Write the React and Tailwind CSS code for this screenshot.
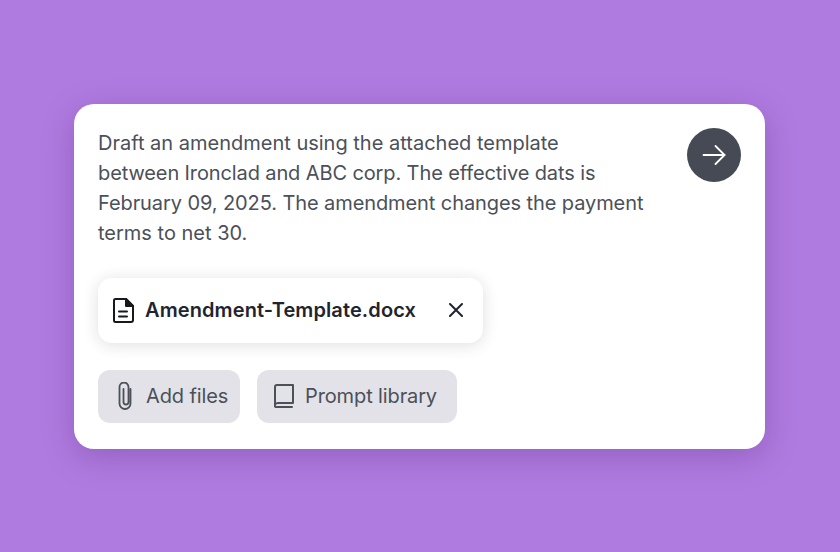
function ToolButton({ icon, label, className }) {
    return (
        <button type="button" className={`flex h-[53px] items-center rounded-xl bg-[#e2e2e8] text-[20px] tracking-[-0.12px] text-[#4b5059] ${className}`}>
            {icon}
            {label}
        </button>
    );
}

export default function App() {
    return (
        <div className="flex h-[552px] w-[840px] items-center justify-center bg-[#b07be0] pr-px font-['Inter',sans-serif]">
            <div className="flex h-[345px] w-[691px] flex-col rounded-[20px] bg-white px-6 pt-6 shadow-[0_8px_32px_rgba(70,30,110,0.28)]">
                <div className="flex items-start justify-between">
                    <p className="whitespace-nowrap text-[20px] leading-[30px] text-[#4b5059]">
                        <span className="block">Draft an amendment using the attached template</span>
                        <span className="block tracking-[-0.115px]">between Ironclad and ABC corp. The effective dats is</span>
                        <span className="block tracking-[-0.09px]">February 09, 2025. The amendment changes the payment</span>
                        <span className="block">terms to net 30.</span>
                    </p>
                    <button type="button" className="flex h-[54px] w-[54px] items-center justify-center rounded-full bg-[#454a54]">
                        <svg width="24" height="20" viewBox="0 0 24 20" fill="none" stroke="white" strokeWidth="1.8" strokeLinecap="round" strokeLinejoin="round">
                            <path d="M1.500 10h21" />
                            <path d="M13.500 1l9 9-9 9" />
                        </svg>
                    </button>
                </div>

                <div className="mt-[30px] flex h-[65px] w-[385px] items-center rounded-[14px] bg-white pl-[15px] shadow-[0_2px_16px_rgba(30,30,50,0.14)]">
                    <svg width="21" height="25" viewBox="0 0 21 25" fill="none" stroke="#16181d" strokeWidth="2" strokeLinejoin="round" strokeLinecap="round">
                        <path d="M2.500 1h10.500l7 7v14a2 2 0 0 1-2 2H2.500a1.500 1.500 0 0 1-1.500-1.500v-20A1.500 1.500 0 0 1 2.500 1z" />
                        <path d="M13 1v7h7z" fill="#16181d" />
                        <path d="M6 13.500h8M6 18.500h8" />
                    </svg>
                    <span className="ml-[11px] text-[20px] font-semibold tracking-[0.1px] text-[#1f2430]">Amendment-Template.docx</span>
                    <svg className="ml-[33px]" width="14" height="14" viewBox="0 0 14 14" fill="none" stroke="#1f2430" strokeWidth="2" strokeLinecap="round">
                        <path d="M1 1l12 12M13 1L1 13" />
                    </svg>
                </div>

                <div className="mt-[27px] flex gap-[17px]">
                    <ToolButton
                        className="w-[142px] pl-[20px]"
                        label="Add files"
                        icon={
                            <svg className="mr-[14px]" width="14" height="28" viewBox="10 6 14 28" fill="none" stroke="#4b5059" strokeWidth="1.800" strokeLinecap="round">
                                <path d="M22.500 13V27.500a5.500 5.500 0 0 1-11 0V11a4.500 4.500 0 0 1 9 0V26a2.500 2.500 0 0 1-5 0V13" />
                            </svg>
                        }
                    />
                    <ToolButton
                        className="w-[200px] pl-[17px]"
                        label="Prompt library"
                        icon={
                            <svg className="mr-[11px]" width="20" height="24" viewBox="0 0 20 24" fill="none" stroke="#4b5059" strokeWidth="2" strokeLinecap="round" strokeLinejoin="round">
                                <path d="M1 21V3a2 2 0 0 1 2-2h16v18H4a3 3 0 0 0-3 2 1.500 1.500 0 0 0 2 2h15" />
                            </svg>
                        }
                    />
                </div>
            </div>
        </div>
    );
}
